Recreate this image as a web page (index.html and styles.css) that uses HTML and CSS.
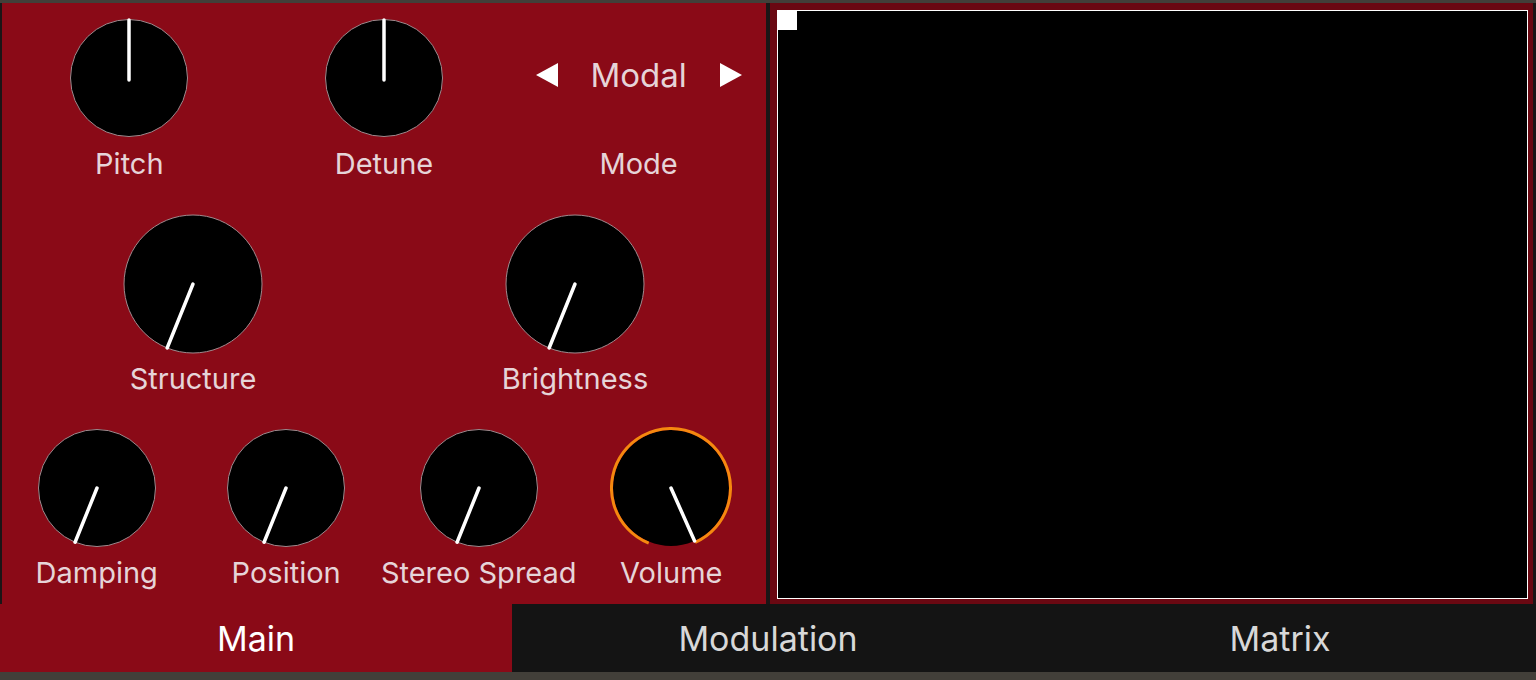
FILE: index.html
```html
<!DOCTYPE html>
<html lang="en">
<head>
    <meta charset="UTF-8">
    <title>Rings</title>
    <link rel="stylesheet" href="styles.css">
</head>
<body>
    <div class="top-strip"></div>
    <div class="workspace">
        <div class="panel">
            <div class="row row-three">
                <div class="control">
                    <svg class="knob" width="122" height="122" viewBox="0 0 122 122">
                        <circle cx="61" cy="61" r="58.5" class="knob-body"/>
                        <line x1="61" y1="63" x2="61" y2="3" class="knob-pointer"/>
                    </svg>
                    <div class="label">Pitch</div>
                </div>
                <div class="control">
                    <svg class="knob" width="122" height="122" viewBox="0 0 122 122">
                        <circle cx="61" cy="61" r="58.5" class="knob-body"/>
                        <line x1="61" y1="63" x2="61" y2="3" class="knob-pointer"/>
                    </svg>
                    <div class="label">Detune</div>
                </div>
                <div class="control">
                    <div class="selector">
                        <span class="arrow arrow-left"></span>
                        <span class="selector-value">Modal</span>
                        <span class="arrow arrow-right"></span>
                    </div>
                    <div class="label">Mode</div>
                </div>
            </div>

            <div class="row row-two">
                <div class="control">
                    <svg class="knob" width="140" height="140" viewBox="0 0 140 140">
                        <circle cx="70" cy="70" r="69" class="knob-body"/>
                        <line x1="70" y1="70" x2="70" y2="1" class="knob-pointer" transform="rotate(202 70 70)"/>
                    </svg>
                    <div class="label">Structure</div>
                </div>
                <div class="control">
                    <svg class="knob" width="140" height="140" viewBox="0 0 140 140">
                        <circle cx="70" cy="70" r="69" class="knob-body"/>
                        <line x1="70" y1="70" x2="70" y2="1" class="knob-pointer" transform="rotate(202 70 70)"/>
                    </svg>
                    <div class="label">Brightness</div>
                </div>
            </div>

            <div class="row row-four">
                <div class="control">
                    <svg class="knob" width="122" height="122" viewBox="0 0 122 122">
                        <circle cx="61" cy="61" r="58.5" class="knob-body"/>
                        <line x1="61" y1="61" x2="61" y2="2.5" class="knob-pointer" transform="rotate(202 61 61)"/>
                    </svg>
                    <div class="label">Damping</div>
                </div>
                <div class="control">
                    <svg class="knob" width="122" height="122" viewBox="0 0 122 122">
                        <circle cx="61" cy="61" r="58.5" class="knob-body"/>
                        <line x1="61" y1="61" x2="61" y2="2.5" class="knob-pointer" transform="rotate(202 61 61)"/>
                    </svg>
                    <div class="label">Position</div>
                </div>
                <div class="control">
                    <svg class="knob" width="122" height="122" viewBox="0 0 122 122">
                        <circle cx="61" cy="61" r="58.5" class="knob-body"/>
                        <line x1="61" y1="61" x2="61" y2="2.5" class="knob-pointer" transform="rotate(202 61 61)"/>
                    </svg>
                    <div class="label">Stereo Spread</div>
                </div>
                <div class="control">
                    <svg class="knob" width="122" height="122" viewBox="0 0 122 122">
                        <circle cx="61" cy="61" r="58" class="knob-body knob-active"/>
                        <path d="M 38.71 116.17 A 59.5 59.5 0 1 1 85.2 115.35" class="knob-ring"/>
                        <line x1="61" y1="61" x2="61" y2="3" class="knob-pointer" transform="rotate(156 61 61)"/>
                    </svg>
                    <div class="label">Volume</div>
                </div>
            </div>
        </div>

        <div class="display-frame">
            <div class="display">
                <div class="cursor"></div>
            </div>
        </div>
    </div>

    <nav class="tabs">
        <div class="tab active">Main</div>
        <div class="tab">Modulation</div>
        <div class="tab">Matrix</div>
    </nav>
    <div class="bottom-strip"></div>
</body>
</html>
```

FILE: styles.css
```css
* {
    margin: 0;
    padding: 0;
    box-sizing: border-box;
}

:root {
    --red: #8a0a17;
    --red-dark: #6a0812;
    --label: #e6d4d8;
    --tab-bg: #141414;
    --strip: #423f39;
}

body {
    background: var(--strip);
    font-family: Inter, Roboto, "Liberation Sans", sans-serif;
    width: 1536px;
    height: 680px;
    overflow: hidden;
}

.top-strip {
    height: 3px;
}

.workspace {
    display: flex;
    height: 601px;
    background: #1b1516;
    padding: 0 3px 0 2px;
    gap: 4px;
}

/* left panel with knobs */
.panel {
    width: 764px;
    background: var(--red);
    padding-top: 14px;
}

.row {
    display: grid;
}

.row-three {
    grid-template-columns: repeat(3, 1fr);
}

.row-two {
    grid-template-columns: 382px 382px;
    margin-top: 33px;
}

.row-four {
    grid-template-columns: repeat(4, 1fr);
    margin-top: 31px;
}

.control {
    display: flex;
    flex-direction: column;
    align-items: center;
}

.knob {
    display: block;
}

.knob-body {
    fill: #000;
    stroke: #a08a8e;
    stroke-width: 1;
}

.knob-active {
    stroke: none;
}

.knob-pointer {
    stroke: #fff;
    stroke-width: 3.5;
    stroke-linecap: round;
}

.knob-ring {
    fill: none;
    stroke: #f5880f;
    stroke-width: 3;
}

.label {
    margin-top: 8px;
    height: 34px;
    line-height: 34px;
    font-size: 29px;
    color: var(--label);
    white-space: nowrap;
}

.row-four .label {
    margin-top: 7px;
}

.selector {
    height: 122px;
    display: flex;
    align-items: center;
    padding-bottom: 6px;
    gap: 33px;
}

.selector-value {
    font-size: 33px;
    color: var(--label);
}

.arrow {
    width: 0;
    height: 0;
    border-top: 12px solid transparent;
    border-bottom: 12px solid transparent;
}

.arrow-left {
    border-right: 22px solid #fff;
}

.arrow-right {
    border-left: 22px solid #fff;
}

/* right panel */
.display-frame {
    flex: 1;
    background: var(--red-dark);
    padding: 7px 5px 5px 7px;
}

.display {
    position: relative;
    height: 100%;
    background: #000;
    border: 1px solid #fff;
}

.cursor {
    position: absolute;
    top: 0;
    left: 0;
    width: 19px;
    height: 19px;
    background: #fff;
}

/* tab bar */
.tabs {
    display: grid;
    grid-template-columns: repeat(3, 1fr);
    height: 68px;
    background: var(--tab-bg);
}

.tab {
    display: flex;
    align-items: center;
    justify-content: center;
    font-size: 34px;
    color: #d8d8d8;
}

.tab.active {
    background: var(--red);
    color: #fff;
}

.bottom-strip {
    height: 8px;
}
```
